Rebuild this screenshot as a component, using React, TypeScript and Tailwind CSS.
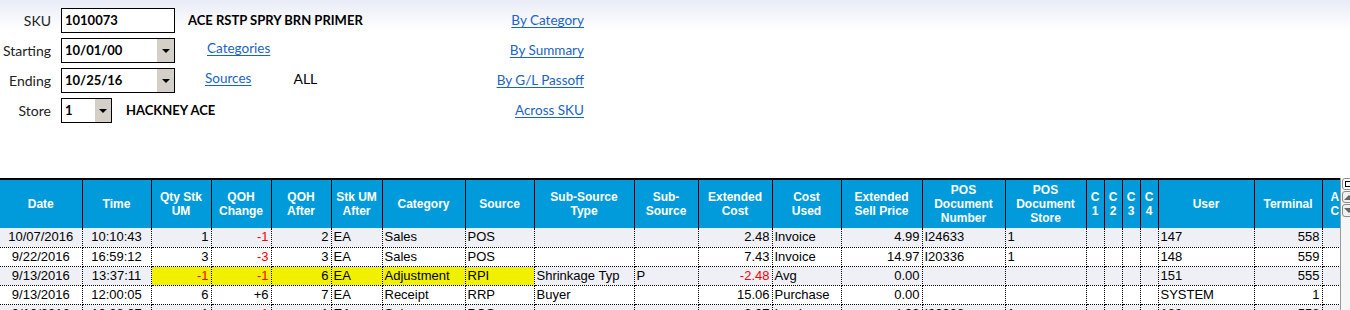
const columns = [
  { w: "w-[82px]", label: ["Date"], align: "text-center" },
  { w: "w-[69px]", label: ["Time"], align: "text-center" },
  { w: "w-[60px]", label: ["Qty Stk", "UM"], align: "text-right" },
  { w: "w-[60px]", label: ["QOH", "Change"], align: "text-right" },
  { w: "w-[60px]", label: ["QOH", "After"], align: "text-right" },
  { w: "w-[51px]", label: ["Stk UM", "After"], align: "text-left" },
  { w: "w-[83px]", label: ["Category"], align: "text-left" },
  { w: "w-[69px]", label: ["Source"], align: "text-left" },
  { w: "w-[100px]", label: ["Sub-Source", "Type"], align: "text-left" },
  { w: "w-[64px]", label: ["Sub-", "Source"], align: "text-left" },
  { w: "w-[74px]", label: ["Extended", "Cost"], align: "text-right" },
  { w: "w-[69px]", label: ["Cost", "Used"], align: "text-left" },
  { w: "w-[81px]", label: ["Extended", "Sell Price"], align: "text-right" },
  { w: "w-[83px]", label: ["POS", "Document", "Number"], align: "text-left" },
  { w: "w-[81px]", label: ["POS", "Document", "Store"], align: "text-left" },
  { w: "w-[18px]", label: ["C", "1"], align: "text-left" },
  { w: "w-[18px]", label: ["C", "2"], align: "text-left" },
  { w: "w-[18px]", label: ["C", "3"], align: "text-left" },
  { w: "w-[18px]", label: ["C", "4"], align: "text-left" },
  { w: "w-[96px]", label: ["User"], align: "text-left" },
  { w: "w-[68px]", label: ["Terminal"], align: "text-right" },
  { w: "w-[40px]", label: ["A", "C"], align: "text-left" },
];

type Row = { cells: string[]; bg: string; yellow?: boolean };

const rows: Row[] = [
  {
    cells: ["10/07/2016", "10:10:43", "1", "-1", "2", "EA", "Sales", "POS", "", "", "2.48", "Invoice", "4.99", "I24633", "1", "", "", "", "", "147", "558", ""],
    bg: "bg-[#eef0f5]",
  },
  {
    cells: ["9/22/2016", "16:59:12", "3", "-3", "3", "EA", "Sales", "POS", "", "", "7.43", "Invoice", "14.97", "I20336", "1", "", "", "", "", "148", "559", ""],
    bg: "bg-white",
  },
  {
    cells: ["9/13/2016", "13:37:11", "-1", "-1", "6", "EA", "Adjustment", "RPI", "Shrinkage Typ", "P", "-2.48", "Avg", "0.00", "", "", "", "", "", "", "151", "555", ""],
    bg: "bg-[#eef0f5]",
    yellow: true,
  },
  {
    cells: ["9/13/2016", "12:00:05", "6", "+6", "7", "EA", "Receipt", "RRP", "Buyer", "", "15.06", "Purchase", "0.00", "", "", "", "", "", "", "SYSTEM", "1", ""],
    bg: "bg-white",
  },
  {
    cells: ["9/10/2016", "10:08:27", "1", "-1", "1", "EA", "Sales", "POS", "", "", "2.97", "Invoice", "4.99", "I20938", "1", "", "", "", "", "133", "558", ""],
    bg: "bg-[#eef0f5]",
  },
];

// columns highlighted on the adjustment row
const yellowCols = [2, 3, 4, 5, 6, 7];

function Dropdown({ value, wide }: { value: string; wide?: boolean }) {
  return (
    <div className={`flex h-[25px] border border-black bg-white ${wide ? "w-[114px]" : "w-[51px]"}`}>
      <span className="flex-1 pl-[3px] text-[13px] font-bold leading-[23px]">{value}</span>
      <span className={`flex items-center justify-center bg-[#d4d0c8] ${wide ? "w-[17px]" : "w-[16px]"}`}>
        <span className="h-0 w-0 border-x-[4px] border-t-[4px] border-x-transparent border-t-black" />
      </span>
    </div>
  );
}

function Label({ children }: { children: string }) {
  return <span className="w-[51px] shrink-0 text-right text-[14px] text-[#222]">{children}</span>;
}

function Link({ children, className = "" }: { children: string; className?: string }) {
  return <a className={`text-[13.5px] text-[#1a64c8] underline underline-offset-2 ${className}`}>{children}</a>;
}

export default function App() {
  return (
    <div className="h-[310px] w-[1350px] overflow-hidden bg-[linear-gradient(to_bottom,#e9ecf7_0px,#ffffff_30px)] font-[Lato,sans-serif] text-black">
      {/* Filter form */}
      <div className="flex h-[178px] flex-col gap-[5px] pt-[8px]">
        <div className="flex h-[25px] w-[584px] items-center">
          <Label>SKU</Label>
          <div className="ml-[10px] h-[25px] w-[114px] border border-black bg-white pl-[3px] text-[13px] font-bold leading-[23px]">1010073</div>
          <span className="ml-[13px] text-[13px] font-bold">ACE RSTP SPRY BRN PRIMER</span>
          <Link className="ml-auto">By Category</Link>
        </div>
        <div className="flex h-[25px] w-[584px] items-center">
          <Label>Starting</Label>
          <div className="ml-[10px]">
            <Dropdown value="10/01/00" wide />
          </div>
          <Link className="ml-[32px] self-start">Categories</Link>
          <Link className="ml-auto">By Summary</Link>
        </div>
        <div className="flex h-[25px] w-[584px] items-center">
          <Label>Ending</Label>
          <div className="ml-[10px]">
            <Dropdown value="10/25/16" wide />
          </div>
          <Link className="ml-[30px] self-start">Sources</Link>
          <span className="ml-[42px] self-start text-[14px]">ALL</span>
          <Link className="ml-auto">By G/L Passoff</Link>
        </div>
        <div className="flex h-[25px] w-[584px] items-center">
          <Label>Store</Label>
          <div className="ml-[10px]">
            <Dropdown value="1" />
          </div>
          <span className="ml-[14px] text-[13px] font-bold">HACKNEY ACE</span>
          <Link className="ml-auto">Across SKU</Link>
        </div>
      </div>

      {/* Grid */}
      <div className="flex">
        <div className="w-[1340px] shrink-0 overflow-hidden">
          <table className="w-[1362px] table-fixed border-collapse font-['Liberation_Sans',Arial,sans-serif]">
            <colgroup>
              {columns.map((c, i) => (
                <col key={i} className={c.w} />
              ))}
            </colgroup>
            <thead>
              <tr className="h-[49px]">
                {columns.map((c, i) => (
                  <th
                    key={i}
                    className={`border-t-2 border-r border-black bg-[#019bdc] align-middle text-[12px] font-bold leading-[14px] text-white ${i === columns.length - 1 ? "pl-[8px] text-left" : "text-center"}`}
                  >
                    {c.label.map((l, j) => (
                      <div key={j}>{l}</div>
                    ))}
                  </th>
                ))}
              </tr>
            </thead>
            <tbody>
              {rows.map((r, ri) => (
                <tr key={ri} className={`h-[19px] ${r.bg}`}>
                  {r.cells.map((v, ci) => {
                    const red = v.startsWith("-");
                    const hl = r.yellow && yellowCols.includes(ci);
                    return (
                      <td
                        key={ci}
                        className={`overflow-hidden whitespace-nowrap border-r border-b border-dotted border-black px-[2px] text-[13px] leading-[18px] ${columns[ci].align} ${red ? "text-[#ff0000]" : "text-black"} ${hl ? "bg-[#f0f000]" : ""}`}
                      >
                        {v}
                      </td>
                    );
                  })}
                </tr>
              ))}
            </tbody>
          </table>
        </div>

        {/* Vertical scrollbar */}
        <div className="flex h-[132px] w-[18px] shrink-0 flex-col gap-[1px] border-l border-[#9a9a9a] bg-[#f6f6f6] pl-[1px]">
          <div className="flex h-[12px] items-center rounded-l-[3px] border border-[#8a8a8a] bg-white pl-[2px]">
            <span className="h-[6px] w-[6px] border border-black" />
          </div>
          <div className="flex h-[12px] items-center rounded-l-[3px] border border-[#8a8a8a] bg-[#f0f0f0] pl-[1px]">
            <span className="h-0 w-0 border-x-[5px] border-b-[5px] border-x-transparent border-b-[#666]" />
          </div>
          <div className="flex h-[13px] items-center rounded-l-[3px] border border-[#8a8a8a] bg-[#f0f0f0] pl-[1px]">
            <span className="h-0 w-0 border-x-[5px] border-t-[5px] border-x-transparent border-t-[#666]" />
          </div>
        </div>
      </div>
    </div>
  );
}
